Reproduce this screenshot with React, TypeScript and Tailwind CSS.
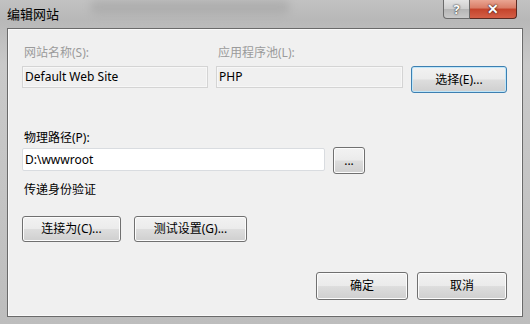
import React from "react";

const font = "font-['Noto_Sans','Noto_Sans_CJK_SC',sans-serif]";

const Button = ({
  label,
  className = "",
  primary = false,
}: {
  label: string;
  className?: string;
  primary?: boolean;
}) => (
  <button
    className={`flex items-center justify-center rounded-[3px] border text-[12px] text-black ${
      primary
        ? "border-[#3c7fb1] shadow-[inset_0_0_0_1px_#bfe6f9]"
        : "border-[#707070] shadow-[inset_0_0_0_1px_#fcfcfc]"
    } bg-[linear-gradient(#f2f2f2_0%,#ebebeb_48%,#dddddd_52%,#cfcfcf_100%)] ${className}`}
  >
    {label}
  </button>
);

const App = () => {
  return (
    <div
      className={`flex h-[324px] w-[530px] flex-col bg-[linear-gradient(180deg,#c2c2c2_0%,#b8b8b8_6%,#c9c9c9_20%,#c4c4c4_60%,#bdbdbd_100%)] ${font}`}
    >
      {/* title bar */}
      <div className="relative flex h-[28px] items-start justify-between pl-[7px] pr-[13px]">
        <div className="pointer-events-none absolute left-[90px] top-[0px] h-[14px] w-[200px] rounded-full bg-[#8a8a8a] opacity-30 blur-[4px]" />
        <span className="relative mt-[6px] text-[13px] leading-[16px] text-black">
          编辑网站
        </span>
        <div className="relative flex">
          <div className="flex h-[19px] w-[27px] items-center justify-center rounded-bl-[4px] border border-t-0 border-[#6b6b6b] bg-[linear-gradient(#e4e4e4_0%,#cdcdcd_50%,#b5b5b5_51%,#c9c9c9_100%)] text-[13px] font-bold leading-none text-white [text-shadow:0_0_2px_#333,0_0_1px_#333]">
            ?
          </div>
          <div className="flex h-[19px] w-[47px] items-center justify-center rounded-br-[4px] border border-l-0 border-t-0 border-[#5a2a22] bg-[linear-gradient(#e9a592_0%,#d97c66_45%,#c4432b_50%,#d45f47_100%)] text-[14px] font-bold leading-none text-white [text-shadow:0_0_2px_#3a1510,0_0_1px_#3a1510]">
            ✕
          </div>
        </div>
      </div>

      {/* client area */}
      <div className="mx-[7px] flex h-[289px] flex-col border border-[#6a6a6a] bg-[#f0f0f0] pl-[14px] pr-[15px] text-[12px] text-black shadow-[inset_0_0_0_1px_#fafafa]">
        <div className="mt-[16px] flex leading-[16px] text-[#9b9b9b]">
          <span className="ml-[2px] w-[192px]">网站名称(S):</span>
          <span className="ml-[2px]">应用程序池(L):</span>
        </div>
        <div className="mt-[5px] flex items-start">
          <div className="flex h-[22px] w-[186px] items-center border border-[#d4d4d4] bg-[#f0f0f0] pl-[2px] shadow-[inset_0_0_0_1px_#f7f7f7]">
            Default Web Site
          </div>
          <div className="ml-[8px] flex h-[22px] w-[187px] items-center border border-[#d4d4d4] bg-[#f0f0f0] pl-[2px] shadow-[inset_0_0_0_1px_#f7f7f7]">
            PHP
          </div>
          <Button label="选择(E)..." primary className="ml-[8px] h-[27px] w-[96px]" />
        </div>

        <div className="ml-[2px] mt-[37px] leading-[16px]">物理路径(P):</div>
        <div className="mt-[1px] flex items-start">
          <div className="mt-[1px] flex h-[23px] w-[303px] items-center rounded-[2px] border border-[#d9dce0] bg-white pl-[2px]">
            D:\wwwroot
          </div>
          <Button label="..." className="ml-[8px] h-[27px] w-[32px] text-[#1a3a7a]" />
        </div>

        <div className="ml-[2px] mt-[8px] leading-[16px]">传递身份验证</div>

        <div className="mt-[18px] flex">
          <Button label="连接为(C)..." className="h-[26px] w-[99px]" />
          <Button label="测试设置(G)..." className="ml-[13px] h-[26px] w-[113px]" />
        </div>

        <div className="mt-[30px] flex justify-end">
          <Button label="确定" className="h-[28px] w-[92px]" />
          <Button label="取消" className="ml-[9px] h-[28px] w-[90px]" />
        </div>
      </div>
    </div>
  );
};

export default App;
